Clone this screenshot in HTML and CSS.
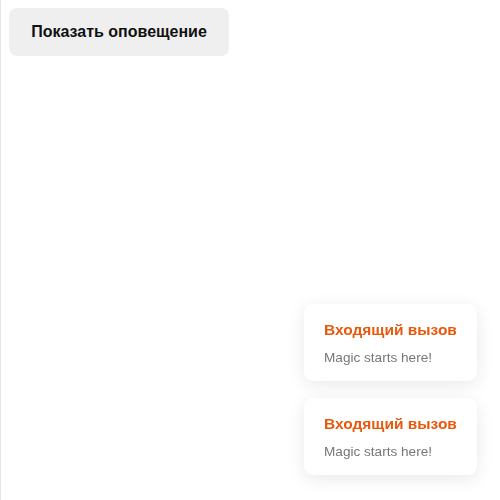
FILE: index.html
```html
<!DOCTYPE html>
<html lang="ru">
<head>
<meta charset="utf-8">
<link rel="stylesheet" href="styles.css">
</head>
<body>
<main class="page">
  <button class="show-btn" type="button">Показать оповещение</button>
</main>
<section class="toasts">
  <div class="toast">
    <div class="toast-title">Входящий вызов</div>
    <div class="toast-text">Magic starts here!</div>
  </div>
  <div class="toast">
    <div class="toast-title">Входящий вызов</div>
    <div class="toast-text">Magic starts here!</div>
  </div>
</section>
</body>
</html>
```
FILE: styles.css
```css
html, body {
  margin: 0;
  height: 100%;
}
body {
  font-family: "Liberation Sans", Arial, sans-serif;
  background: #fff;
  border-left: 1px solid #e6e6e6;
  box-sizing: border-box;
}
.page {
  padding: 8px;
}
.show-btn {
  display: block;
  width: 220px;
  height: 48px;
  border: none;
  border-radius: 8px;
  background: #efefef;
  color: #111;
  font-family: "Liberation Sans", Arial, sans-serif;
  font-size: 16px;
  font-weight: 700;
  padding: 0;
}
.toasts {
  position: fixed;
  right: 23px;
  bottom: 25px;
  display: flex;
  flex-direction: column;
  gap: 17px;
}
.toast {
  width: 173px;
  height: 77px;
  box-sizing: border-box;
  padding: 16px 20px 15px;
  background: #fff;
  border-radius: 9px;
  box-shadow: 0 4px 18px rgba(0, 0, 0, 0.09);
}
.toast-title {
  color: #e8590c;
  font-size: 15.5px;
  font-weight: 700;
  line-height: 20px;
  white-space: nowrap;
}
.toast-text {
  margin-top: 10px;
  color: #777;
  font-size: 13.6px;
  line-height: 16px;
  white-space: nowrap;
}
```
